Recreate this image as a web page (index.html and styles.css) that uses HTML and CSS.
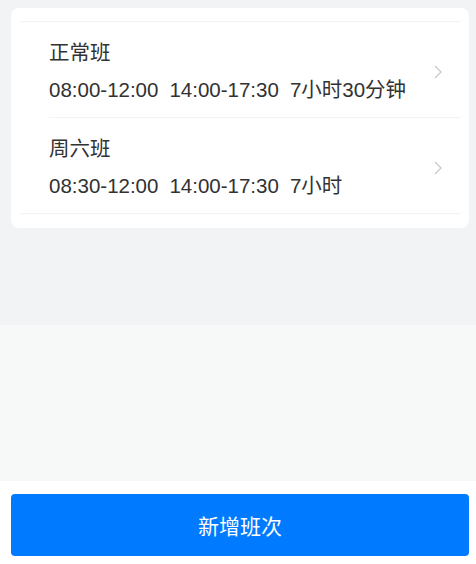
FILE: index.html
```html
<!DOCTYPE html>
<html lang="zh-CN">
<head>
    <meta charset="UTF-8">
    <title>班次管理</title>
    <link rel="stylesheet" href="styles.css">
</head>
<body>
    <div class="page">
        <div class="content">
            <div class="card">
                <ul class="shift-list">
                    <li class="shift">
                        <div class="shift-info">
                            <div class="shift-name">正常班</div>
                            <div class="shift-time">
                                <span>08:00-12:00</span>
                                <span>14:00-17:30</span>
                                <span>7小时30分钟</span>
                            </div>
                        </div>
                        <svg class="arrow" width="8" height="14" viewBox="0 0 8 14">
                            <path d="M1 1 L7 7 L1 13" fill="none" stroke="#c8c9cc" stroke-width="1.3"/>
                        </svg>
                    </li>
                    <li class="shift">
                        <div class="shift-info">
                            <div class="shift-name">周六班</div>
                            <div class="shift-time">
                                <span>08:30-12:00</span>
                                <span>14:00-17:30</span>
                                <span>7小时</span>
                            </div>
                        </div>
                        <svg class="arrow" width="8" height="14" viewBox="0 0 8 14">
                            <path d="M1 1 L7 7 L1 13" fill="none" stroke="#c8c9cc" stroke-width="1.3"/>
                        </svg>
                    </li>
                </ul>
            </div>
        </div>
        <div class="filler"></div>
        <div class="footer">
            <button class="add-btn">新增班次</button>
        </div>
    </div>
</body>
</html>
```

FILE: styles.css
```css
html, body {
    margin: 0;
    padding: 0;
    height: 100%;
}

body {
    font-family: "Liberation Sans", Arial, "Noto Sans CJK SC", sans-serif;
    color: #323233;
}

.page {
    display: flex;
    flex-direction: column;
    height: 100%;
}

.content {
    height: 325px;
    padding: 8px 7px 0 11px;
    box-sizing: border-box;
    background-color: #f2f3f5;
}

.card {
    background: #fff;
    border-radius: 8px;
    padding: 13px 8px 14px 10px;
}

.shift-list {
    list-style: none;
    margin: 0;
    padding: 0;
    border-top: 1px solid #f2f3f5;
    border-bottom: 1px solid #f2f3f5;
}

.shift {
    display: flex;
    align-items: center;
    margin-left: 28px;
    padding: 16px 0 12px 0;
}

.shift + .shift {
    border-top: 1px solid #f2f3f5;
}

.shift-info {
    flex: 1;
}

.shift-name {
    font-size: 20.5px;
    line-height: 30px;
}

.shift-time {
    display: flex;
    gap: 11px;
    margin-top: 7px;
    font-size: 20.5px;
    line-height: 30px;
}

.arrow {
    display: block;
    margin-right: 19px;
}

.filler {
    flex: 1;
    background-color: #f7f8f8;
}

.footer {
    background: #fff;
    padding: 13px 7px 8px 11px;
}

.add-btn {
    display: block;
    width: 100%;
    height: 62px;
    border: none;
    border-radius: 4px;
    background-color: #007aff;
    color: #fff;
    font-family: "Liberation Sans", Arial, "Noto Sans CJK SC", sans-serif;
    font-size: 21px;
    cursor: pointer;
}
```
